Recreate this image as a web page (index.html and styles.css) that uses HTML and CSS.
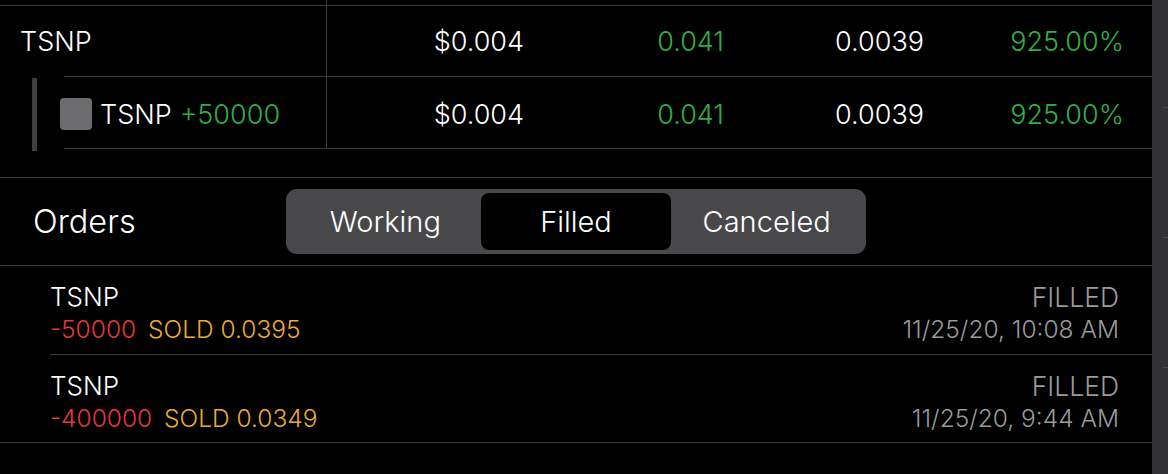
FILE: index.html
```html
<!DOCTYPE html>
<html lang="en">
<head>
  <meta charset="UTF-8">
  <meta name="viewport" content="width=device-width, initial-scale=1.0">
  <title>Positions and Orders</title>
  <link rel="stylesheet" href="styles.css">
</head>
<body>
  <div class="screen">
    <div class="main">
      <div class="positions">
        <div class="pos-row">
          <div class="pos-name">TSNP</div>
          <div class="num">$0.004</div>
          <div class="num up">0.041</div>
          <div class="num">0.0039</div>
          <div class="num up">925.00%</div>
        </div>
        <div class="pos-row lot">
          <div class="pos-name">
            <span class="lot-bar"></span>
            <span class="lot-icon"></span>
            <span>TSNP</span>
            <span class="up">+50000</span>
          </div>
          <div class="num">$0.004</div>
          <div class="num up">0.041</div>
          <div class="num">0.0039</div>
          <div class="num up">925.00%</div>
        </div>
      </div>

      <div class="orders-head">
        <h2>Orders</h2>
        <div class="segmented">
          <button>Working</button>
          <button class="active">Filled</button>
          <button>Canceled</button>
        </div>
      </div>

      <ul class="orders">
        <li class="order">
          <div class="order-left">
            <span class="symbol">TSNP</span>
            <span class="detail"><span class="qty">-50000</span> <span class="side">SOLD 0.0395</span></span>
          </div>
          <div class="order-right">
            <span class="status">FILLED</span>
            <span class="detail">11/25/20, 10:08 AM</span>
          </div>
        </li>
        <li class="order">
          <div class="order-left">
            <span class="symbol">TSNP</span>
            <span class="detail"><span class="qty">-400000</span> <span class="side">SOLD 0.0349</span></span>
          </div>
          <div class="order-right">
            <span class="status">FILLED</span>
            <span class="detail">11/25/20, 9:44 AM</span>
          </div>
        </li>
      </ul>
    </div>
    <div class="rail">
      <span class="tick"></span>
      <span class="tick"></span>
      <span class="tick"></span>
    </div>
  </div>
</body>
</html>
```

FILE: styles.css
```css
body {
  margin: 0;
  background: #000;
  color: #fff;
  font-family: Inter, "Noto Sans", sans-serif;
  font-weight: 300;
}

.screen {
  display: flex;
  height: 474px;
  overflow: hidden;
}

.main {
  flex: 1;
  background: #000;
}

.rail {
  width: 16px;
  background: #323234;
  display: flex;
  flex-direction: column;
  align-items: flex-end;
  padding-top: 107px;
  gap: 129px;
  box-sizing: border-box;
}

.tick {
  width: 5px;
  height: 1px;
  background: #4a4a4c;
}

/* positions table */
.positions {
  padding-top: 5px;
  margin-bottom: 28px;
  background: linear-gradient(#3a3a3c, #3a3a3c) 326px 0 / 1px 100% no-repeat;
}

.pos-row {
  display: grid;
  grid-template-columns: 327px repeat(4, 200px);
  align-items: center;
  height: 72px;
  font-size: 27px;
  background: linear-gradient(#3a3a3c, #3a3a3c) 64px 100% / calc(100% - 64px) 1px no-repeat;
}

.pos-row:first-child {
  border-top: 1px solid #3a3a3c;
  height: 71px;
}

.pos-name {
  padding-left: 20px;
  display: flex;
  align-items: center;
  height: 100%;
}

.lot .pos-name {
  padding-left: 32px;
}

.lot-bar {
  width: 5px;
  height: 73px;
  margin-top: 1px;
  background: #3e3e40;
  align-self: flex-start;
}

.lot-icon {
  width: 32px;
  height: 32px;
  border-radius: 4px;
  background: #6c6c6e;
  margin: 0 8px 0 23px;
}

.lot .up {
  margin-left: 8px;
}

.num {
  text-align: right;
  padding-right: 3px;
}

.up {
  color: #2eaf45;
}

/* orders header */
.orders-head {
  display: flex;
  align-items: center;
  height: 87px;
  border-top: 1px solid #3a3a3c;
  border-bottom: 1px solid #3e3e40;
}

.orders-head h2 {
  margin: 0;
  width: 253px;
  padding-left: 33px;
  font-size: 32.5px;
  font-weight: 300;
}

.segmented {
  display: grid;
  grid-template-columns: repeat(3, 1fr);
  width: 580px;
  height: 65px;
  padding: 4px;
  box-sizing: border-box;
  background: #48484b;
  border-radius: 11px;
}

.segmented button {
  background: transparent;
  border: none;
  color: #fff;
  font-family: inherit;
  font-weight: 300;
  font-size: 29px;
  border-radius: 8px;
  padding: 0;
}

.segmented .active {
  background: #000;
}

/* orders list */
.orders {
  list-style: none;
  margin: 0;
  padding: 0;
}

.order {
  display: flex;
  justify-content: space-between;
  margin-left: 50px;
  padding: 15px 33px 8.5px 0;
  border-bottom: 1px solid #3a3a3c;
  line-height: 32px;
}

.order:last-child {
  margin-left: 0;
  padding-left: 50px;
}

.order-left,
.order-right {
  display: flex;
  flex-direction: column;
}

.order-right {
  align-items: flex-end;
  color: #9a9a9c;
}

.symbol {
  font-size: 26px;
}

.detail {
  font-size: 24.5px;
}

.status {
  font-size: 26.5px;
}

.qty {
  color: #e5383d;
}

.side {
  color: #eaac2e;
  margin-left: 5px;
}
```
